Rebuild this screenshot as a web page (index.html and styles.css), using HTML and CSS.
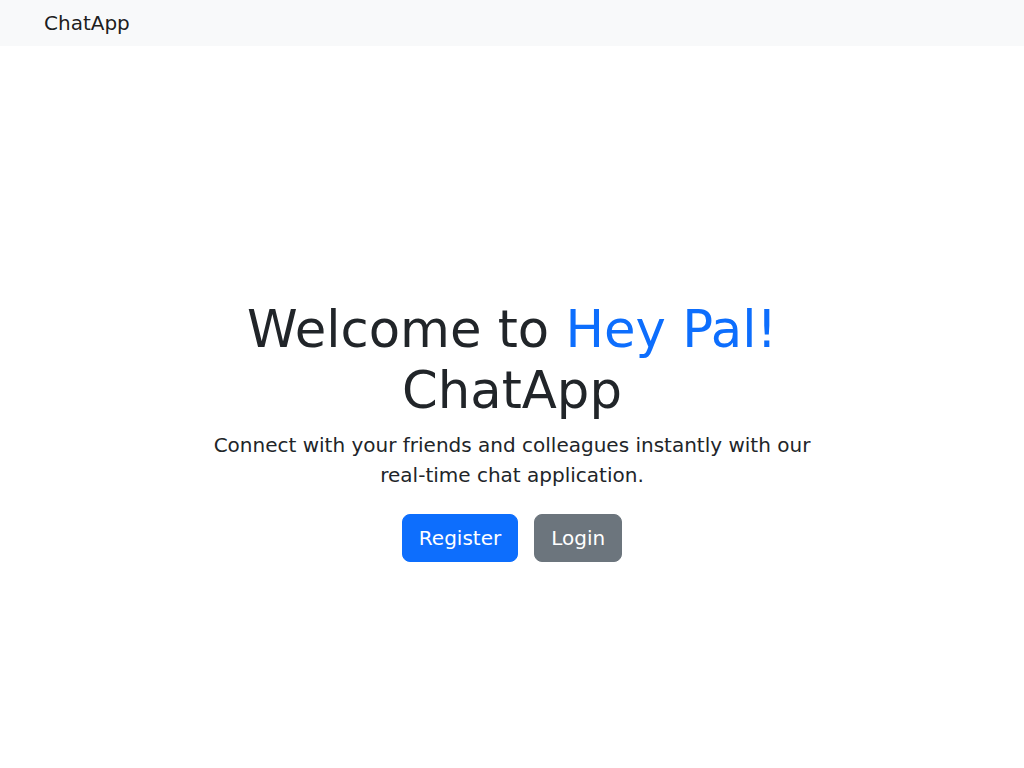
FILE: index.html
```html
<!DOCTYPE html>
<html lang="en">
<head>
<meta charset="utf-8">
<title>ChatApp</title>
<link rel="stylesheet" href="styles.css">
</head>
<body>
<nav class="navbar">
  <div class="container">
    <a class="brand" href="#">ChatApp</a>
  </div>
</nav>
<main class="hero">
  <div class="hero-inner">
    <h1 class="display">Welcome to <span class="accent">Hey Pal!</span> ChatApp</h1>
    <p class="lead">Connect with your friends and colleagues instantly with our real-time chat application.</p>
    <div class="actions">
      <a class="btn btn-primary" href="#">Register</a>
      <a class="btn btn-secondary" href="#">Login</a>
    </div>
  </div>
</main>
</body>
</html>
```
FILE: styles.css
```css
* { box-sizing: border-box; }
html, body { margin: 0; padding: 0; }
body {
  font-family: "DejaVu Sans", "Liberation Sans", sans-serif;
  font-size: 16px;
  line-height: 1.5;
  color: #212529;
  background: #fff;
}
.navbar {
  background: #f8f9fa;
  height: 46px;
  display: flex;
  align-items: center;
}
.container {
  width: 960px;
  margin: 0 auto;
  padding: 0 12px;
}
.brand {
  font-size: 20px;
  line-height: 30px;
  color: rgba(0, 0, 0, 0.9);
  text-decoration: none;
  display: inline-block;
}
.hero {
  min-height: 768px;
  display: flex;
  align-items: center;
  justify-content: center;
}
.hero-inner {
  width: 616px;
  text-align: center;
}
.display {
  font-size: 51.25px;
  font-weight: 400;
  line-height: 1.2;
  margin: 0 0 8px;
}
.accent { color: #0d6efd; }
.lead {
  font-size: 20px;
  font-weight: 400;
  line-height: 1.5;
  margin: 0 0 24px;
}
.actions {
  display: flex;
  justify-content: center;
  gap: 16px;
}
.btn {
  display: inline-block;
  font-size: 20px;
  line-height: 30px;
  padding: 8px 16px;
  border: 1px solid transparent;
  border-radius: 8px;
  color: #fff;
  text-decoration: none;
}
.btn-primary { background: #0d6efd; border-color: #0d6efd; }
.btn-secondary { background: #6c757d; border-color: #6c757d; }
```
